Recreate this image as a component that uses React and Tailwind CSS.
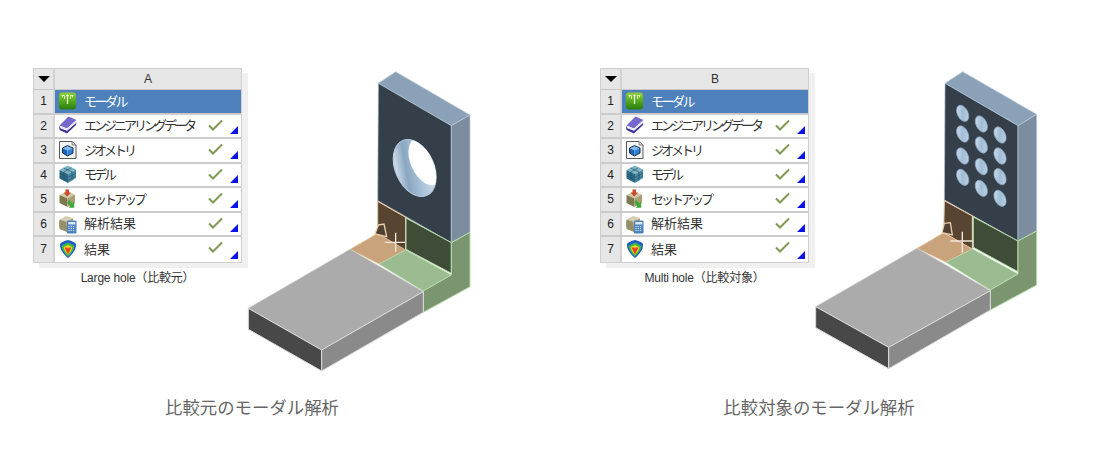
import React from 'react';

const ModelIcon = () => (
  <svg width="20" height="20" viewBox="0 0 20 20">
    <defs>
      <linearGradient id="model-green" x1="0" y1="0" x2="0" y2="1">
        <stop offset="0" stopColor="#8fd236" />
        <stop offset="0.5" stopColor="#55ab1c" />
        <stop offset="1" stopColor="#2c7a10" />
      </linearGradient>
    </defs>
    <rect x="2" y="1.5" width="17" height="17" rx="3" fill="url(#model-green)" />
    <path d="M10.5 3.5v9.5M9.3 4.5h2.4" stroke="#f4f8e8" strokeWidth="1.2" fill="none" />
    <path d="M4.5 4.5h3v3.5M5.5 4.5v2M13.5 8V4.5h3M15.5 4.5v2" stroke="#dff0c0" strokeWidth="1" fill="none" />
  </svg>
);

const BookIcon = () => (
  <svg width="20" height="20" viewBox="0 0 20 20">
    <path d="M11.5 0.5 L19.5 4 L10 12.5 L2.5 9.5 Z" fill="#7468cc" />
    <path d="M2.5 9.5 Q1.5 13 3.5 14.5 L10 17.5 L19 9 L19.5 6.5 L10 14.5 L3.5 12 Z" fill="#3f3592" />
    <path d="M2.7 9.8 L10 12.6 L19.5 4 L19.5 6.5 L10 14.8 L3.4 12.2 Z" fill="#ecebf8" />
  </svg>
);

const GeometryIcon = () => (
  <svg width="20" height="20" viewBox="0 0 20 20">
    <path d="M2.5 1.5 H15 L19 5 V18.5 H2.5 Z" fill="#f4f4f0" stroke="#55595c" strokeWidth="1" />
    <path d="M15 1.5 V5 H19" fill="#c8c8c8" stroke="#777" strokeWidth="0.8" />
    <path d="M10.5 5.5 L16 8 L10.5 10.5 L5.5 8 Z" fill="#7fb8f0" />
    <path d="M5.5 8 L10.5 10.5 V16 L5.5 13 Z" fill="#1f62b8" />
    <path d="M16 8 L10.5 10.5 V16 L16 13 Z" fill="#2f80d8" />
    <path d="M10.5 5.5 L16 8 V13 L10.5 16 L5.5 13 V8 Z" fill="none" stroke="#16304f" strokeWidth="1" />
  </svg>
);

const MeshIcon = () => (
  <svg width="20" height="20" viewBox="0 0 20 20">
    <path d="M10.5 0.5 L19 4.5 L11 9 L2.5 5 Z" fill="#7eb4c6" />
    <path d="M2.5 5 L11 9 V18 L2.5 13.5 Z" fill="#2f6c88" />
    <path d="M19 4.5 L11 9 V18 L19 13 Z" fill="#4a8ba4" />
    <path d="M6.5 3 L15 7 M14.5 2.7 L6.8 7 M2.5 8.5 L11 12.5 L19 8 M2.5 11 L11 15.5 L19 10.5 M7 7 V15.8 M15 7 V15.5" stroke="#1c4a60" strokeWidth="0.6" fill="none" />
  </svg>
);

const SetupIcon = () => (
  <svg width="20" height="20" viewBox="0 0 20 20">
    <path d="M10 2.5 L18 5.5 L10.5 9.5 L2.5 6 Z" fill="#cfc6a2" />
    <path d="M2.5 6 L10.5 9.5 V18 L2.5 14 Z" fill="#7f7750" />
    <path d="M18 5.5 L10.5 9.5 V18 L18 14 Z" fill="#a89e72" />
    <path d="M8.5 0.5 H12 V3.5 H14 L10.2 7.5 L6.5 3.5 H8.5 Z" fill="#cc4a28" />
    <path d="M12 11 L15.5 14.5 L17.2 12.8 V18.8 H11.5 L13.3 17 L10 13.5 Z" fill="#3fa83a" />
  </svg>
);

const SolutionIcon = () => (
  <svg width="20" height="20" viewBox="0 0 20 20">
    <path d="M9 2 L16 4 L9 8 L2.5 5.5 Z" fill="#d6ceb2" />
    <path d="M2.5 5.5 Q1.5 10 2.5 15 L10 18 V8 Z" fill="#978f68" />
    <path d="M16 4 L9 8 V12 L16 10 Z" fill="#b0a87e" />
    <rect x="10" y="6.5" width="9.5" height="13" rx="1" fill="#4c82bc" />
    <rect x="11.3" y="8" width="7" height="2.5" fill="#dce9f6" />
    <path d="M11.3 12.5h7M11.3 14.5h7M11.3 16.5h7" stroke="#cfe0f2" strokeWidth="1" strokeDasharray="1.4 0.9" />
  </svg>
);

const ResultIcon = () => (
  <svg width="20" height="20" viewBox="0 0 20 20">
    <path d="M11 1 Q17 2.5 19 5 Q19.5 12 11 19 Q2.5 12 3 5 Q5 2.5 11 1 Z" fill="#1f5ac8" />
    <path d="M11 3.5 Q15.5 5 17.5 7 Q16.5 13 11 17.5 Q5.5 13 4.5 7 Q6.5 5 11 3.5 Z" fill="#36b84a" />
    <path d="M11 6 Q14 7 15.5 8.5 Q14.5 12.5 11 16 Q7.5 12.5 6.5 8.5 Q8 7 11 6 Z" fill="#f0d820" />
    <path d="M7.5 8.5 H14.5 L11 15.5 Z" fill="#e8401c" />
    <path d="M8.5 8 H13.5 L11 9.8 Z" fill="#f4a030" />
  </svg>
);

const rows = [
  { id: 1, label: 'モーダル', Icon: ModelIcon, track: 'tracking-[-2.5px]', active: true },
  { id: 2, label: 'エンジニアリングデータ', Icon: BookIcon, track: 'tracking-[-3px]' },
  { id: 3, label: 'ジオメトリ', Icon: GeometryIcon, track: 'tracking-[-3px]' },
  { id: 4, label: 'モデル', Icon: MeshIcon, track: 'tracking-[-3px]' },
  { id: 5, label: 'セットアップ', Icon: SetupIcon, track: 'tracking-[-3px]' },
  { id: 6, label: '解析結果', Icon: SolutionIcon, track: 'tracking-[0px]' },
  { id: 7, label: '結果', Icon: ResultIcon, track: 'tracking-[0px]' },
];

const SchematicTable = ({ column }) => (
  <div className="w-[209px] border border-[#cfcfcf] bg-white shadow-[6px_5px_0_#f0f0f0]">
    <div className="flex h-[21px] border-b border-[#c8c8c8] bg-[#e6e6e6]">
      <div className="flex w-[21px] items-center justify-center border-r-2 border-[#d2d2d2]">
        <div className="h-0 w-0 border-x-[6px] border-t-[6px] border-x-transparent border-t-black" />
      </div>
      <div className="flex-1 text-center text-[12px] leading-[20px] text-[#333]">{column}</div>
    </div>
    {rows.map(({ id, label, Icon, track, active }) => (
      <div key={id} className="flex h-[24.5px] border-b-2 border-[#cccccc] last:border-b-0">
        <div className="flex w-[21px] items-center justify-center border-r-2 border-[#d2d2d2] bg-[#e6e6e6] text-[12px] text-[#222]">
          {id}
        </div>
        <div className={active ? 'relative flex flex-1 items-center bg-[#4e81bc]' : 'relative flex flex-1 items-center bg-white'}>
          <div className="ml-[2px] w-[27px] shrink-0">
            <Icon />
          </div>
          <span className={active ? `text-[13px] text-white ${track}` : `text-[13px] text-[#333] ${track}`}>{label}</span>
          {!active && (
            <>
              <svg className="absolute left-[153px] top-[4px]" width="15" height="12" viewBox="0 0 15 12">
                <path d="M1 6.5 L5 10.5 L14 1.5" stroke="#7f9a55" strokeWidth="2" fill="none" />
              </svg>
              <svg className="absolute bottom-[3px] right-[3px]" width="8" height="8" viewBox="0 0 8 8">
                <path d="M8 0 V8 H0 Z" fill="#0a14e8" />
              </svg>
            </>
          )}
        </div>
      </div>
    ))}
  </div>
);

const edge = { blue: '#b9cbdd', green: '#b5dca8', orange: '#eccfa8', gray: '#dcdcdc' };

const BracketBase = ({ g }) => (
  <>
    {/* upright plate */}
    <polygon points={g.plateTop} fill="#8ba1b7" stroke={edge.blue} strokeWidth="2" />
    <polygon points={g.plateFront} fill="#353f49" stroke={edge.blue} strokeWidth="2" />
    <polygon points={g.plateSide} fill="#7b8d9f" stroke={edge.blue} strokeWidth="2" />
    {/* corner patches */}
    <polygon points={g.brownWall} fill="#574532" stroke={edge.orange} strokeWidth="3" />
    <polygon points={g.greenWall} fill="#3f4d38" stroke={edge.green} strokeWidth="3" />
    <polygon points={g.orangeFloor} fill="#c9a37c" stroke={edge.orange} strokeWidth="2" />
    <polygon points={g.greenFloor} fill="#9bbb90" stroke={edge.green} strokeWidth="2" />
    <polygon points={g.greenSide} fill="#7a9570" stroke={edge.green} strokeWidth="3" />
    {/* base plate */}
    <polygon points={g.baseTop} fill="#ababab" stroke="#c8c8c8" strokeWidth="2" />
    <polygon points={g.baseFront} fill="#484848" stroke={edge.gray} strokeWidth="3" />
    <polygon points={g.baseSide} fill="#8a8a8a" stroke={edge.gray} strokeWidth="3" />
    {/* small tab and cross marker */}
    <polygon points={g.tab} fill="#4f4134" stroke={edge.orange} strokeWidth="4" />
    <path d={g.cross} stroke="#f2e8dc" strokeWidth="4" fill="none" />
  </>
);

const largeHoleGeo = {
  plateTop: '415,70 467,35 690,165 634,197',
  plateFront: '415,70 634,197 634,548 413,422',
  plateSide: '634,197 690,165 690,517 634,548',
  brownWall: '413,424 497,472 497,575 413,525',
  greenWall: '498,474 634,548 634,640 498,568',
  orangeFloor: '330,568 413,520 497,570 417,612',
  greenFloor: '417,612 497,570 634,645 550,693',
  greenSide: '634,548 690,517 690,680 550,757 550,693 634,645',
  baseTop: '25,745 330,568 550,695 245,870',
  baseFront: '25,745 245,870 245,933 25,808',
  baseSide: '245,870 550,695 550,757 245,933',
  tab: '415,495 432,492 440,530 405,522',
  cross: 'M435,547 H495 M467,518 V575',
};

const multiHoleGeo = {
  plateTop: '414,70 467,35 689,163 633,197',
  plateFront: '414,70 633,197 633,543 412,420',
  plateSide: '633,197 689,163 689,513 633,543',
  brownWall: '412,422 496,468 496,568 410,518',
  greenWall: '499,471 633,543 633,635 499,562',
  orangeFloor: '330,565 410,518 496,567 417,607',
  greenFloor: '417,607 496,567 633,642 550,690',
  greenSide: '633,543 689,513 689,675 550,750 550,690 633,642',
  baseTop: '26,740 330,565 550,692 245,862',
  baseFront: '26,740 245,862 245,926 26,803',
  baseSide: '245,862 550,692 550,750 245,926',
  tab: '412,490 430,488 436,525 405,518',
  cross: 'M430,543 H497 M466,515 V578',
};

const holes = [
  [467, 160], [467, 222], [467, 288], [467, 352],
  [523, 192], [523, 255], [523, 320], [523, 385],
  [579, 225], [579, 288], [579, 350], [579, 415],
];

const LargeHoleBracket = () => (
  <svg className="shrink-0" width="238" height="320" viewBox="6 0 714 960">
    <defs>
      <linearGradient id="hole-wall" x1="0" y1="0.3" x2="1" y2="0.7">
        <stop offset="0" stopColor="#dbe7f2" />
        <stop offset="0.3" stopColor="#8aa6c0" />
        <stop offset="0.6" stopColor="#a9c2d8" />
        <stop offset="1" stopColor="#d4e2ee" />
      </linearGradient>
      <clipPath id="hole-clip">
        <ellipse cx="524" cy="324" rx="58" ry="90" transform="rotate(-24 524 324)" />
      </clipPath>
    </defs>
    <BracketBase g={largeHoleGeo} />
    <ellipse cx="524" cy="324" rx="58" ry="90" transform="rotate(-24 524 324)" fill="url(#hole-wall)" stroke="#bcd0e2" strokeWidth="3" />
    <g clipPath="url(#hole-clip)">
      <ellipse cx="556" cy="304" rx="44" ry="76" transform="rotate(-24 556 304)" fill="#ffffff" />
    </g>
  </svg>
);

const MultiHoleBracket = () => (
  <svg className="shrink-0" width="238" height="320" viewBox="6 0 714 960">
    <defs>
      <linearGradient id="small-hole" x1="0" y1="0" x2="1" y2="1">
        <stop offset="0" stopColor="#dbe8f3" />
        <stop offset="0.5" stopColor="#a0bcd6" />
        <stop offset="1" stopColor="#c6d9ea" />
      </linearGradient>
    </defs>
    <BracketBase g={multiHoleGeo} />
    {holes.map(([x, y]) => (
      <ellipse key={`${x}-${y}`} cx={x} cy={y} rx="16" ry="26" transform={`rotate(-26 ${x} ${y})`} fill="url(#small-hole)" stroke="#8ea6bc" strokeWidth="2" />
    ))}
  </svg>
);

const Figure = ({ column, tableCaption, caption, Bracket }) => (
  <div className="w-[438px] shrink-0">
    <div className="flex h-[320px] items-start">
      <div className="mt-2 w-[209px] shrink-0">
        <SchematicTable column={column} />
        <p className="mt-[6px] text-center text-[12px] leading-[18px] tracking-[-0.2px] text-[#333]">{tableCaption}</p>
      </div>
      <Bracket />
    </div>
    <p className="mt-[16px] text-center text-[17.4px] leading-[24px] text-[#666666]">{caption}</p>
  </div>
);

const App = () => (
  <div className="flex h-[462px] w-[1101px] gap-[129px] overflow-hidden bg-white pl-[33px] pt-[60px] font-['Liberation_Sans','Noto_Sans_CJK_JP',sans-serif]">
    <Figure column="A" tableCaption="Large hole（比較元）" caption="比較元のモーダル解析" Bracket={LargeHoleBracket} />
    <Figure column="B" tableCaption="Multi hole（比較対象）" caption="比較対象のモーダル解析" Bracket={MultiHoleBracket} />
  </div>
);

export default App;
